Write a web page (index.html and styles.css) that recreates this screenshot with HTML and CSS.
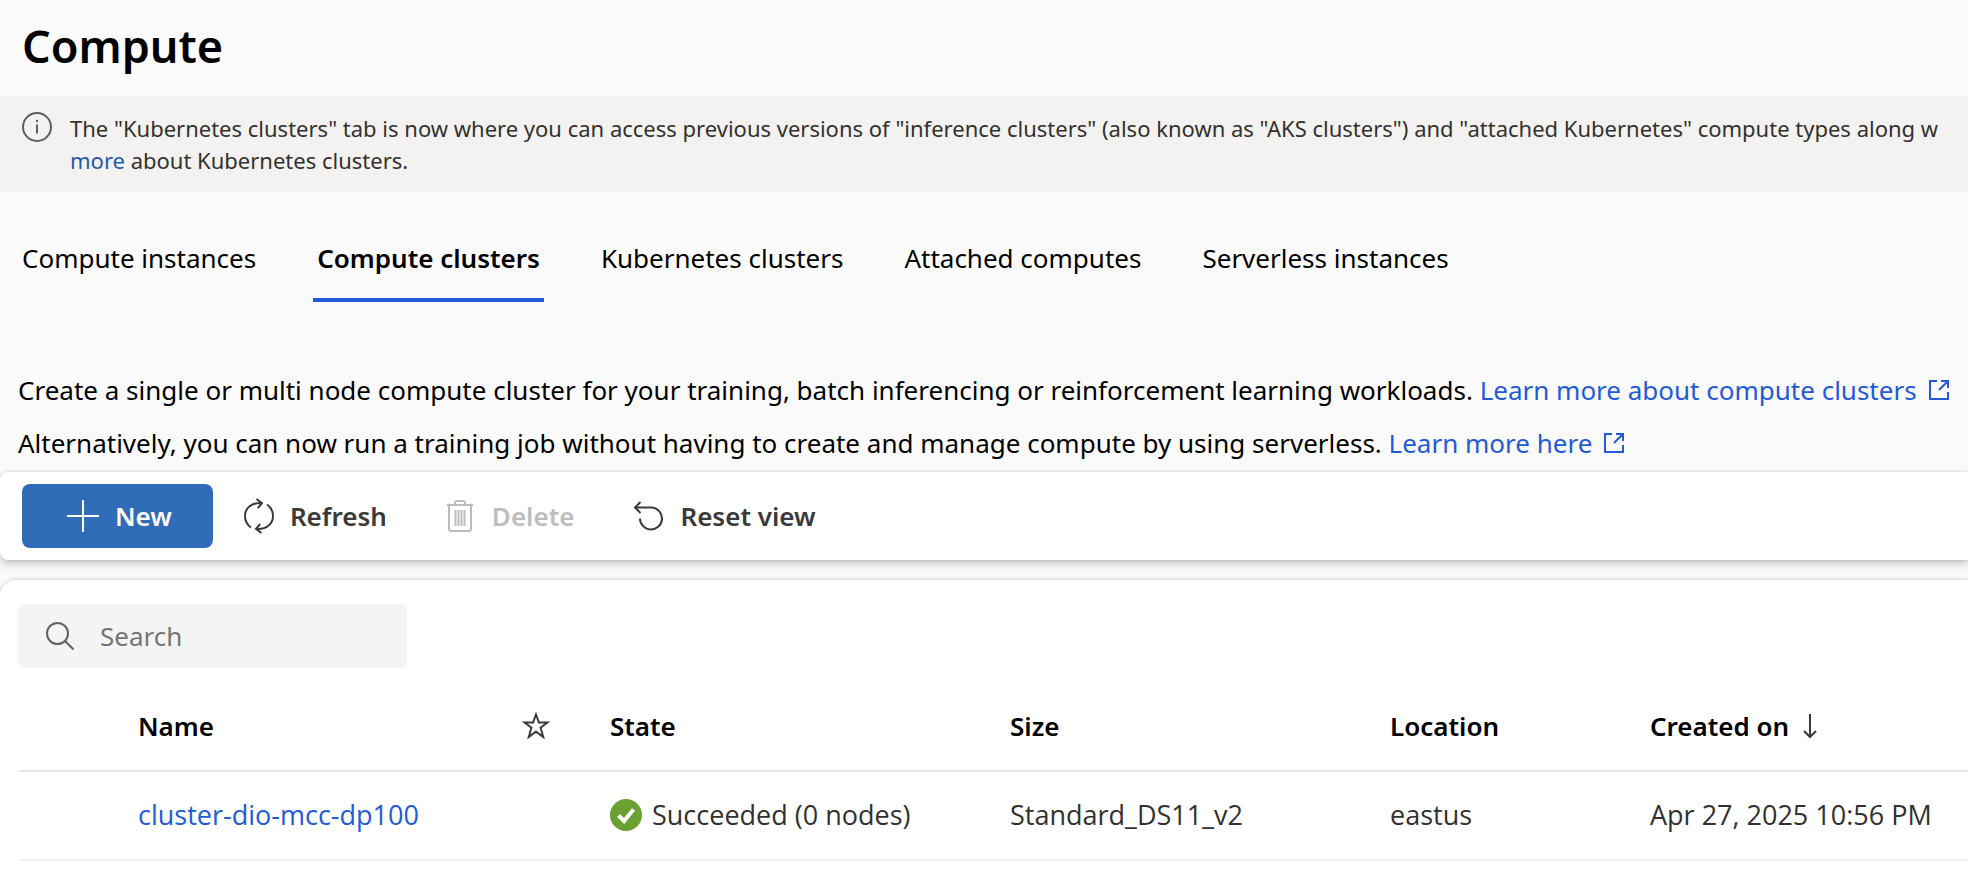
FILE: index.html
```html
<!DOCTYPE html>
<html lang="en">
<head>
<meta charset="utf-8">
<title>Compute</title>
<link rel="stylesheet" href="styles.css">
</head>
<body>
<svg class="sprite" aria-hidden="true">
  <symbol id="open" viewBox="0 0 20 20">
    <path d="M8 1H1v18h18v-7M12 1h7v7M19 1l-9 9"/>
  </symbol>
</svg>

<header class="page-header">
  <h1 class="title">Compute</h1>
</header>

<section class="notice">
  <svg class="notice-icon" viewBox="0 0 30 30" aria-hidden="true">
    <circle cx="15" cy="15" r="14"/>
    <path d="M15 12.500v9M15 8v2"/>
  </svg>
  <p class="notice-text">The "Kubernetes clusters" tab is now where you can access previous versions of "inference clusters" (also known as "AKS clusters") and "attached Kubernetes" compute types along w<br>
  <a class="notice-link" href="#">more</a> about Kubernetes clusters.</p>
</section>

<div class="tabs" role="tablist">
  <button class="tab" role="tab" aria-selected="false">Compute instances</button>
  <button class="tab tab-active" role="tab" aria-selected="true">Compute clusters</button>
  <button class="tab" role="tab" aria-selected="false">Kubernetes clusters</button>
  <button class="tab" role="tab" aria-selected="false">Attached computes</button>
  <button class="tab" role="tab" aria-selected="false">Serverless instances</button>
</div>

<main>
  <div class="intro">
    <p>Create a single or multi node compute cluster for your training, batch inferencing or reinforcement learning workloads. <a class="link" href="#">Learn more about compute clusters<svg class="open-icon" aria-hidden="true"><use href="#open"/></svg></a></p>
    <p>Alternatively, you can now run a training job without having to create and manage compute by using serverless. <a class="link" href="#">Learn more here<svg class="open-icon" aria-hidden="true"><use href="#open"/></svg></a></p>
  </div>

  <div class="toolbar" role="toolbar">
    <button class="command command-primary">
      <svg class="icon" viewBox="0 0 32 32" aria-hidden="true"><path d="M16 0v32M0 16h32"/></svg>
      New
    </button>
    <button class="command command-refresh">
      <svg class="icon icon-refresh" viewBox="0 0 30 36" aria-hidden="true">
        <path d="M7 29.500A14 14 0 0 1 1 18C1 10.500 7 4.500 17.500 5M12.500 1l5.500 4.200-4.200 5M23 6.500a14 14 0 0 1 6 11.500c0 7.500-6 13.500-16.500 13M17.500 35l-5.500-4.200 4.200-5"/>
      </svg>
      Refresh
    </button>
    <button class="command command-delete" disabled>
      <svg class="icon" viewBox="0 0 32 32" aria-hidden="true">
        <path d="M3 5h26M5 5v24q0 2 2 2h18q2 0 2-2V5M11 5V3q0-2 2-2h6q2 0 2 2v2M11.500 10v16M14.500 10v16M17.500 10v16M20.500 10v16"/>
      </svg>
      Delete
    </button>
    <button class="command command-reset">
      <svg class="icon icon-reset" viewBox="0 0 30 30" aria-hidden="true">
        <path d="M6.500 1l-5.500 5.500 5.500 5.500M1 6.500h17a11 11 0 1 1-12 11"/>
      </svg>
      Reset view
    </button>
  </div>

  <section class="panel">
    <label class="search">
      <svg class="search-icon" viewBox="0 0 28 28" aria-hidden="true"><circle cx="11.500" cy="11.500" r="10.500"/><path d="M19 19l8.500 8.500"/></svg>
      <input class="search-input" type="text" placeholder="Search" aria-label="Search">
    </label>

    <table class="clusters">
      <colgroup>
        <col class="col-select"><col class="col-name"><col class="col-star"><col class="col-state"><col class="col-size"><col class="col-location"><col>
      </colgroup>
      <thead>
        <tr>
          <th></th>
          <th>Name</th>
          <th><svg class="star" viewBox="0 0 28 28" role="img" aria-label="Favorite"><path d="M14 2.500l2.900 8h8.600l-6.900 5.200 2.600 9.300-7.200-5.400L6.800 25l2.600-9.300-6.900-5.200h8.600z"/></svg></th>
          <th>State</th>
          <th>Size</th>
          <th>Location</th>
          <th aria-sort="descending"><span class="cell-flex sort">Created on
            <svg class="sort-icon" viewBox="0 0 14 26" aria-hidden="true"><path d="M7 1v23M1 18l6 6 6-6"/></svg></span></th>
        </tr>
      </thead>
      <tbody>
        <tr>
          <td></td>
          <td><a class="link" href="#">cluster-dio-mcc-dp100</a></td>
          <td></td>
          <td><span class="cell-flex"><svg class="state-icon" viewBox="0 0 32 32" aria-hidden="true"><circle cx="16" cy="16" r="16"/><path d="M8.500 16.500l5.500 5.500 9.500-11.500"/></svg>Succeeded (0 nodes)</span></td>
          <td>Standard_DS11_v2</td>
          <td>eastus</td>
          <td>Apr 27, 2025 10:56 PM</td>
        </tr>
      </tbody>
    </table>
  </section>
</main>
</body>
</html>
```
FILE: styles.css
```css
* {
  box-sizing: border-box;
}

body {
  margin: 0;
  min-height: 100vh;
  display: flex;
  flex-direction: column;
  overflow: hidden;
  background: #fafafa;
  color: #000;
  font: 26px/36px "Segoe UI", "Noto Sans", sans-serif;
  white-space: nowrap;
}

h1,
p {
  margin: 0;
}

button,
input {
  font: inherit;
  color: inherit;
  border: 0;
  background: none;
}

svg {
  flex: none;
  fill: none;
  stroke: currentColor;
  stroke-width: 2;
}

.sprite {
  display: none;
}

.page-header {
  padding: 14px 22px 18px;
}

.title {
  font-size: 45px;
  line-height: 64px;
  font-weight: 600;
}

.notice {
  display: flex;
  gap: 18px;
  padding: 16px 0 16px 22px;
  overflow: hidden;
  background: #f3f2f1;
  color: #323130;
  font-size: 22px;
  line-height: 32px;
}

.notice-icon {
  width: 30px;
  height: 30px;
  color: #605e5c;
}

.notice-link {
  color: #1f5ba8;
  text-decoration: none;
}

.tabs {
  display: flex;
  gap: 53px;
  padding: 40px 18px 0;
}

.tab {
  padding: 8px 4px 22px;
  border-bottom: 4px solid transparent;
}

.tab-active {
  border-bottom-color: #225ad8;
  font-weight: 600;
}

main {
  flex: 1;
  display: flex;
  flex-direction: column;
}

.intro {
  padding: 62px 18px 2px;
  line-height: 53px;
}

.link {
  color: #225ad8;
  text-decoration: none;
}

.open-icon {
  width: 20px;
  height: 20px;
  margin-left: 12px;
}

.toolbar {
  display: flex;
  align-items: center;
  padding: 12px 22px;
  border-radius: 8px 0 0 8px;
  background: #fff;
  box-shadow: 0 4px 8px rgba(0, 0, 0, 0.2), 0 0 3px rgba(0, 0, 0, 0.15);
}

.command {
  display: flex;
  align-items: center;
  gap: 16px;
  height: 64px;
  padding: 0;
  color: #3b3a39;
  font-weight: 600;
}

.command:disabled {
  color: #bdbdbd;
}

.command-primary {
  padding: 0 41px 0 45px;
  border-radius: 8px;
  background: #306cb8;
  color: #fff;
}

.icon {
  width: 32px;
  height: 32px;
}

.command-refresh {
  margin-left: 31px;
}

.icon-refresh {
  width: 30px;
  height: 36px;
}

.command-delete {
  margin-left: 57px;
}

.command-reset {
  margin-left: 60px;
}

.icon-reset {
  width: 30px;
  height: 30px;
}

.panel {
  flex: 1;
  margin-top: 20px;
  padding: 24px 0 0 18px;
  border-radius: 16px 0 0 0;
  background: #fff;
  box-shadow: 0 0 4px rgba(0, 0, 0, 0.2);
}

.search {
  display: flex;
  align-items: center;
  gap: 26px;
  width: 389px;
  height: 64px;
  padding: 0 28px;
  border-radius: 8px;
  background: #f4f4f4;
  color: #616161;
}

.search-icon {
  width: 28px;
  height: 28px;
}

.search-input {
  flex: 1;
  min-width: 0;
  padding: 0;
}

.search-input::placeholder {
  color: #757575;
  opacity: 1;
}

.clusters {
  width: 100%;
  margin-top: 14px;
  table-layout: fixed;
  border-collapse: collapse;
  color: #323130;
}

.clusters th,
.clusters td {
  height: 89px;
  padding: 0;
  text-align: left;
  border-bottom: 2px solid #f3f3f3;
}

.clusters th {
  border-bottom-color: #e8e8e8;
  color: #000;
  font-weight: 600;
}

.clusters td {
  padding-bottom: 2px;
  font-family: "Segoe UI", "Open Sans", sans-serif;
  font-size: 27px;
}

.col-select {
  width: 120px;
}

.col-name {
  width: 384px;
}

.col-star {
  width: 88px;
}

.col-state {
  width: 400px;
}

.col-size {
  width: 380px;
}

.col-location {
  width: 260px;
}

.star {
  display: block;
  width: 28px;
  height: 28px;
  color: #3b3a39;
}

.cell-flex {
  display: flex;
  align-items: center;
  gap: 10px;
}

.sort {
  gap: 14px;
}

.sort-icon {
  width: 14px;
  height: 26px;
  color: #3b3a39;
}

.state-icon {
  width: 32px;
  height: 32px;
  stroke: #fff;
  stroke-width: 4;
}

.state-icon circle {
  fill: #6aa130;
  stroke: none;
}
```
